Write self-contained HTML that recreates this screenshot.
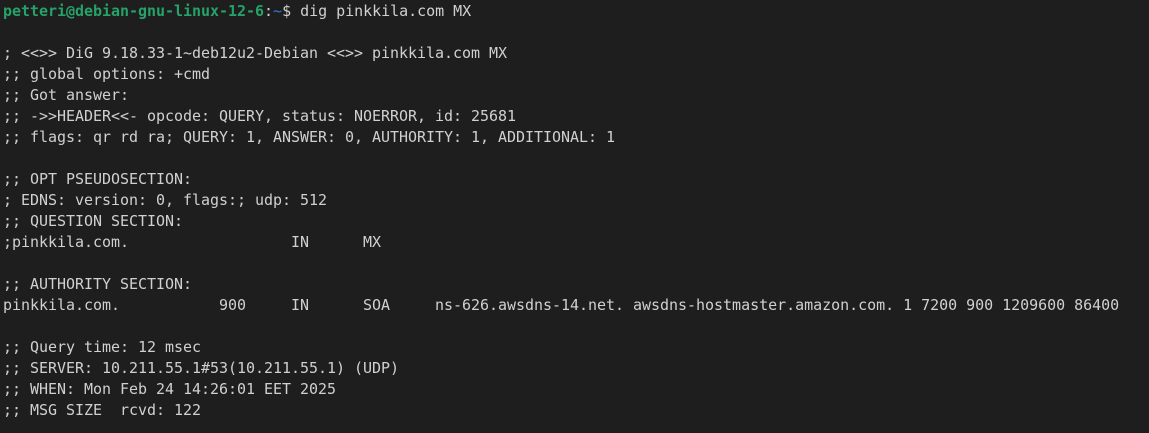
<!DOCTYPE html>
<html><head><meta charset="utf-8"><style>
html,body{margin:0;padding:0;background:#1e1e1e;width:1149px;height:433px;overflow:hidden}
pre{margin:0;padding:1px 0 0 3px;font-family:"DejaVu Sans Mono","Liberation Mono",monospace;font-size:15px;line-height:21px;letter-spacing:-0.03px;color:#d0d0d0;white-space:pre}
.g{color:#26a269;font-weight:bold}.b{color:#2a7bde}
</style></head><body><pre><span class="g">petteri@debian-gnu-linux-12-6</span>:<span class="b">~</span>$ dig pinkkila.com MX

; &lt;&lt;&gt;&gt; DiG 9.18.33-1~deb12u2-Debian &lt;&lt;&gt;&gt; pinkkila.com MX
;; global options: +cmd
;; Got answer:
;; -&gt;&gt;HEADER&lt;&lt;- opcode: QUERY, status: NOERROR, id: 25681
;; flags: qr rd ra; QUERY: 1, ANSWER: 0, AUTHORITY: 1, ADDITIONAL: 1

;; OPT PSEUDOSECTION:
; EDNS: version: 0, flags:; udp: 512
;; QUESTION SECTION:
;pinkkila.com.                  IN      MX

;; AUTHORITY SECTION:
pinkkila.com.           900     IN      SOA     ns-626.awsdns-14.net. awsdns-hostmaster.amazon.com. 1 7200 900 1209600 86400

;; Query time: 12 msec
;; SERVER: 10.211.55.1#53(10.211.55.1) (UDP)
;; WHEN: Mon Feb 24 14:26:01 EET 2025
;; MSG SIZE  rcvd: 122
</pre></body></html>
